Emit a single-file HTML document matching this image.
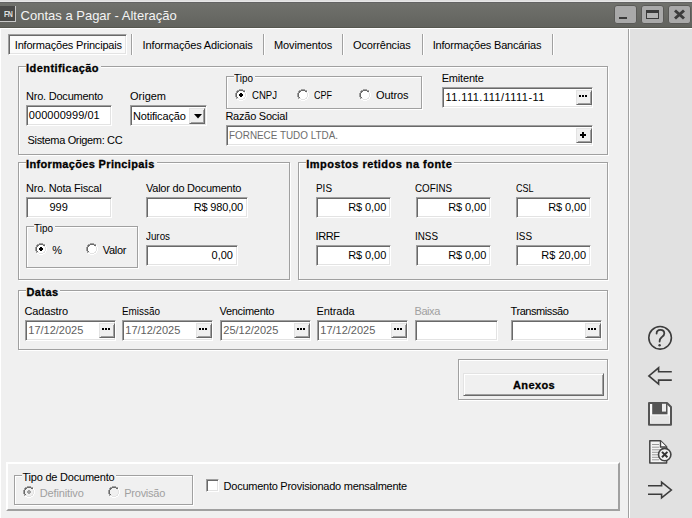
<!DOCTYPE html>
<html><head><meta charset="utf-8"><style>
html,body{margin:0;padding:0;}
body{width:692px;height:518px;overflow:hidden;position:relative;background:#f0f0f0;font-family:'Liberation Sans', sans-serif;}
body>div,body>svg{position:absolute;}
.t{line-height:20px;white-space:pre;height:20px;}
</style></head><body>
<div style="left:0px;top:0px;width:692px;height:1px;background:#dfdfdf"></div>
<div style="left:0px;top:1px;width:692px;height:1px;background:#e8e8e8"></div>
<div style="left:0px;top:2px;width:692px;height:1px;background:#636363"></div>
<div style="left:0px;top:3px;width:692px;height:24px;background:linear-gradient(#70716c,#62635e)"></div>
<div style="left:0px;top:27px;width:692px;height:1px;background:#56574f"></div>
<div style="left:0px;top:28px;width:692px;height:1px;background:#fff"></div>
<div style="left:0px;top:29px;width:1px;height:489px;background:#fff"></div>
<div style="left:628px;top:29px;width:1px;height:489px;background:#a0a0a0"></div>
<div style="left:629px;top:29px;width:1px;height:489px;background:#fff"></div>
<div style="left:630px;top:29px;width:62px;height:489px;background:#e1e1e1"></div>
<div style="left:0px;top:6px;width:16px;height:16px;background:#4a4a48;border-right:1px solid #c8c8c8;border-bottom:1px solid #c8c8c8;box-sizing:border-box"></div>
<div style="left:4px;top:9px;font:bold 8.8px/10px 'Liberation Sans';color:#e0e0e0;letter-spacing:-0.6px;transform:scaleX(0.8);transform-origin:0 0">FN</div>
<div class="t" style="left:20.6px;top:6px;color:#f4f4f4;font-size:13px;">Contas a Pagar - Alteração</div>
<div style="left:614px;top:5px;width:23px;height:19px;background:#a9a9a9;border:1px solid #5a5a57;border-radius:3px;box-sizing:border-box"></div>
<div style="left:641px;top:5px;width:23px;height:19px;background:#a9a9a9;border:1px solid #5a5a57;border-radius:3px;box-sizing:border-box"></div>
<div style="left:668px;top:5px;width:23px;height:19px;background:#a9a9a9;border:1px solid #5a5a57;border-radius:3px;box-sizing:border-box"></div>
<div style="left:619px;top:17px;width:8px;height:2px;background:#3a3a3a"></div>
<div style="left:646px;top:10px;width:13px;height:9px;border:1.3px solid #3a3a3a;border-top-width:3px;box-sizing:border-box;background:#b4b4b4"></div>
<svg style="left:673px;top:9px" width="13" height="11" viewBox="0 0 13 11"><path d="M2 1.5 L11 9.5 M11 1.5 L2 9.5" stroke="#3c3c3c" stroke-width="3"/></svg>
<div style="left:8px;top:34px;width:119px;height:21px;background:#fafafa;border:1px solid;border-color:#a0a0a0 #fff #fff #a0a0a0;box-shadow:inset 1px 1px 0 #696969, inset -1px -1px 0 #e3e3e3;box-sizing:border-box"></div>
<div class="t" style="left:14.8px;top:35px;color:#000;font-size:11px;letter-spacing:-0.195px;">Informações Principais</div>
<div style="left:131px;top:34px;width:1px;height:21px;background:#a0a0a0"></div>
<div style="left:132px;top:34px;width:1px;height:21px;background:#fff"></div>
<div style="left:263px;top:34px;width:1px;height:21px;background:#a0a0a0"></div>
<div style="left:264px;top:34px;width:1px;height:21px;background:#fff"></div>
<div style="left:342px;top:34px;width:1px;height:21px;background:#a0a0a0"></div>
<div style="left:343px;top:34px;width:1px;height:21px;background:#fff"></div>
<div style="left:422px;top:34px;width:1px;height:21px;background:#a0a0a0"></div>
<div style="left:423px;top:34px;width:1px;height:21px;background:#fff"></div>
<div style="left:552px;top:34px;width:1px;height:21px;background:#a0a0a0"></div>
<div style="left:553px;top:34px;width:1px;height:21px;background:#fff"></div>
<div class="t" style="left:142.6px;top:35px;color:#000;font-size:11px;letter-spacing:-0.142px;">Informações Adicionais</div>
<div class="t" style="left:274.0px;top:35px;color:#000;font-size:11px;letter-spacing:-0.130px;">Movimentos</div>
<div class="t" style="left:353.0px;top:35px;color:#000;font-size:11px;letter-spacing:-0.163px;">Ocorrências</div>
<div class="t" style="left:432.7px;top:35px;color:#000;font-size:11px;letter-spacing:-0.186px;">Informações Bancárias</div>
<div style="left:19px;top:67px;width:590px;height:89px;border:1px solid #fff;box-sizing:border-box"></div>
<div style="left:18px;top:66px;width:590px;height:89px;border:1px solid #a0a0a0;box-sizing:border-box"></div>
<div style="left:26px;top:62px;width:75px;height:12px;background:#f0f0f0"></div>
<div class="t" style="left:26.0px;top:58px;color:#000;font-size:11px;font-weight:bold;letter-spacing:0.442px;-webkit-text-stroke:0.3px #000;">Identificação</div>
<div class="t" style="left:26.0px;top:86px;color:#000;font-size:11px;letter-spacing:-0.221px;">Nro. Documento</div>
<div style="left:26px;top:105px;width:86px;height:21px;background:#fff;border:1px solid;border-color:#a0a0a0 #fff #fff #a0a0a0;box-shadow:inset 1px 1px 0 #696969, inset -1px -1px 0 #e3e3e3;box-sizing:border-box"></div>
<div class="t" style="left:28.8px;top:105px;color:#000;font-size:11px;letter-spacing:0.053px;">000000999/01</div>
<div class="t" style="left:130.0px;top:86px;color:#000;font-size:11px;letter-spacing:-0.010px;">Origem</div>
<div style="left:130px;top:105px;width:77px;height:21px;background:#fff;border:1px solid;border-color:#a0a0a0 #fff #fff #a0a0a0;box-shadow:inset 1px 1px 0 #696969, inset -1px -1px 0 #e3e3e3;box-sizing:border-box"></div>
<div class="t" style="left:133.0px;top:106px;color:#000;font-size:11px;letter-spacing:-0.157px;">Notificação</div>
<div style="left:189px;top:108px;width:16px;height:16px;background:#f0f0f0;border:1px solid;border-color:#e3e3e3 #696969 #696969 #e3e3e3;box-shadow:inset 1px 1px 0 #f0f0f0, inset -1px -1px 0 #a0a0a0;box-sizing:border-box"></div>
<svg style="left:194px;top:114px" width="8" height="5" viewBox="0 0 8 5"><path d="M0 0 H8 L4 4.5 Z" fill="#000"/></svg>
<div class="t" style="left:27.6px;top:130px;color:#000;font-size:11px;letter-spacing:-0.342px;">Sistema Origem: CC</div>
<div style="left:227px;top:77px;width:196px;height:33px;border:1px solid #fff;box-sizing:border-box"></div>
<div style="left:226px;top:76px;width:196px;height:33px;border:1px solid #a0a0a0;box-sizing:border-box"></div>
<div style="left:234px;top:72px;width:21px;height:12px;background:#f0f0f0"></div>
<div class="t" style="left:234.0px;top:68px;color:#000;font-size:11px;transform:scaleX(0.9048);transform-origin:0 0;">Tipo</div>
<svg style="left:235px;top:89px" width="12" height="12" viewBox="0 0 12 12" shape-rendering="crispEdges"><rect x="4" y="0" width="4" height="1" fill="#a0a0a0"/><rect x="2" y="1" width="2" height="1" fill="#a0a0a0"/><rect x="4" y="1" width="4" height="1" fill="#696969"/><rect x="8" y="1" width="2" height="1" fill="#a0a0a0"/><rect x="1" y="2" width="1" height="1" fill="#a0a0a0"/><rect x="2" y="2" width="2" height="1" fill="#696969"/><rect x="4" y="2" width="4" height="1" fill="#ffffff"/><rect x="8" y="2" width="2" height="1" fill="#696969"/><rect x="10" y="2" width="1" height="1" fill="#ffffff"/><rect x="1" y="3" width="1" height="1" fill="#a0a0a0"/><rect x="2" y="3" width="1" height="1" fill="#696969"/><rect x="3" y="3" width="6" height="1" fill="#ffffff"/><rect x="9" y="3" width="1" height="1" fill="#e3e3e3"/><rect x="10" y="3" width="1" height="1" fill="#ffffff"/><rect x="0" y="4" width="1" height="1" fill="#a0a0a0"/><rect x="1" y="4" width="1" height="1" fill="#696969"/><rect x="2" y="4" width="8" height="1" fill="#ffffff"/><rect x="10" y="4" width="1" height="1" fill="#e3e3e3"/><rect x="11" y="4" width="1" height="1" fill="#ffffff"/><rect x="0" y="5" width="1" height="1" fill="#a0a0a0"/><rect x="1" y="5" width="1" height="1" fill="#696969"/><rect x="2" y="5" width="8" height="1" fill="#ffffff"/><rect x="10" y="5" width="1" height="1" fill="#e3e3e3"/><rect x="11" y="5" width="1" height="1" fill="#ffffff"/><rect x="0" y="6" width="1" height="1" fill="#a0a0a0"/><rect x="1" y="6" width="1" height="1" fill="#696969"/><rect x="2" y="6" width="8" height="1" fill="#ffffff"/><rect x="10" y="6" width="1" height="1" fill="#e3e3e3"/><rect x="11" y="6" width="1" height="1" fill="#ffffff"/><rect x="0" y="7" width="1" height="1" fill="#a0a0a0"/><rect x="1" y="7" width="1" height="1" fill="#696969"/><rect x="2" y="7" width="8" height="1" fill="#ffffff"/><rect x="10" y="7" width="1" height="1" fill="#e3e3e3"/><rect x="11" y="7" width="1" height="1" fill="#ffffff"/><rect x="1" y="8" width="1" height="1" fill="#a0a0a0"/><rect x="2" y="8" width="1" height="1" fill="#696969"/><rect x="3" y="8" width="6" height="1" fill="#ffffff"/><rect x="9" y="8" width="1" height="1" fill="#e3e3e3"/><rect x="10" y="8" width="1" height="1" fill="#ffffff"/><rect x="1" y="9" width="1" height="1" fill="#a0a0a0"/><rect x="2" y="9" width="2" height="1" fill="#e3e3e3"/><rect x="4" y="9" width="4" height="1" fill="#ffffff"/><rect x="8" y="9" width="2" height="1" fill="#e3e3e3"/><rect x="10" y="9" width="1" height="1" fill="#ffffff"/><rect x="2" y="10" width="2" height="1" fill="#ffffff"/><rect x="4" y="10" width="4" height="1" fill="#e3e3e3"/><rect x="8" y="10" width="2" height="1" fill="#ffffff"/><rect x="4" y="11" width="4" height="1" fill="#ffffff"/><rect x="5" y="4" width="2" height="4" fill="#000"/><rect x="4" y="5" width="4" height="2" fill="#000"/></svg>
<div class="t" style="left:251.5px;top:85px;color:#000;font-size:11px;transform:scaleX(0.8700);transform-origin:0 0;">CNPJ</div>
<svg style="left:297px;top:89px" width="12" height="12" viewBox="0 0 12 12" shape-rendering="crispEdges"><rect x="4" y="0" width="4" height="1" fill="#a0a0a0"/><rect x="2" y="1" width="2" height="1" fill="#a0a0a0"/><rect x="4" y="1" width="4" height="1" fill="#696969"/><rect x="8" y="1" width="2" height="1" fill="#a0a0a0"/><rect x="1" y="2" width="1" height="1" fill="#a0a0a0"/><rect x="2" y="2" width="2" height="1" fill="#696969"/><rect x="4" y="2" width="4" height="1" fill="#ffffff"/><rect x="8" y="2" width="2" height="1" fill="#696969"/><rect x="10" y="2" width="1" height="1" fill="#ffffff"/><rect x="1" y="3" width="1" height="1" fill="#a0a0a0"/><rect x="2" y="3" width="1" height="1" fill="#696969"/><rect x="3" y="3" width="6" height="1" fill="#ffffff"/><rect x="9" y="3" width="1" height="1" fill="#e3e3e3"/><rect x="10" y="3" width="1" height="1" fill="#ffffff"/><rect x="0" y="4" width="1" height="1" fill="#a0a0a0"/><rect x="1" y="4" width="1" height="1" fill="#696969"/><rect x="2" y="4" width="8" height="1" fill="#ffffff"/><rect x="10" y="4" width="1" height="1" fill="#e3e3e3"/><rect x="11" y="4" width="1" height="1" fill="#ffffff"/><rect x="0" y="5" width="1" height="1" fill="#a0a0a0"/><rect x="1" y="5" width="1" height="1" fill="#696969"/><rect x="2" y="5" width="8" height="1" fill="#ffffff"/><rect x="10" y="5" width="1" height="1" fill="#e3e3e3"/><rect x="11" y="5" width="1" height="1" fill="#ffffff"/><rect x="0" y="6" width="1" height="1" fill="#a0a0a0"/><rect x="1" y="6" width="1" height="1" fill="#696969"/><rect x="2" y="6" width="8" height="1" fill="#ffffff"/><rect x="10" y="6" width="1" height="1" fill="#e3e3e3"/><rect x="11" y="6" width="1" height="1" fill="#ffffff"/><rect x="0" y="7" width="1" height="1" fill="#a0a0a0"/><rect x="1" y="7" width="1" height="1" fill="#696969"/><rect x="2" y="7" width="8" height="1" fill="#ffffff"/><rect x="10" y="7" width="1" height="1" fill="#e3e3e3"/><rect x="11" y="7" width="1" height="1" fill="#ffffff"/><rect x="1" y="8" width="1" height="1" fill="#a0a0a0"/><rect x="2" y="8" width="1" height="1" fill="#696969"/><rect x="3" y="8" width="6" height="1" fill="#ffffff"/><rect x="9" y="8" width="1" height="1" fill="#e3e3e3"/><rect x="10" y="8" width="1" height="1" fill="#ffffff"/><rect x="1" y="9" width="1" height="1" fill="#a0a0a0"/><rect x="2" y="9" width="2" height="1" fill="#e3e3e3"/><rect x="4" y="9" width="4" height="1" fill="#ffffff"/><rect x="8" y="9" width="2" height="1" fill="#e3e3e3"/><rect x="10" y="9" width="1" height="1" fill="#ffffff"/><rect x="2" y="10" width="2" height="1" fill="#ffffff"/><rect x="4" y="10" width="4" height="1" fill="#e3e3e3"/><rect x="8" y="10" width="2" height="1" fill="#ffffff"/><rect x="4" y="11" width="4" height="1" fill="#ffffff"/></svg>
<div class="t" style="left:314.0px;top:85px;color:#000;font-size:11px;transform:scaleX(0.8182);transform-origin:0 0;">CPF</div>
<svg style="left:359px;top:89px" width="12" height="12" viewBox="0 0 12 12" shape-rendering="crispEdges"><rect x="4" y="0" width="4" height="1" fill="#a0a0a0"/><rect x="2" y="1" width="2" height="1" fill="#a0a0a0"/><rect x="4" y="1" width="4" height="1" fill="#696969"/><rect x="8" y="1" width="2" height="1" fill="#a0a0a0"/><rect x="1" y="2" width="1" height="1" fill="#a0a0a0"/><rect x="2" y="2" width="2" height="1" fill="#696969"/><rect x="4" y="2" width="4" height="1" fill="#ffffff"/><rect x="8" y="2" width="2" height="1" fill="#696969"/><rect x="10" y="2" width="1" height="1" fill="#ffffff"/><rect x="1" y="3" width="1" height="1" fill="#a0a0a0"/><rect x="2" y="3" width="1" height="1" fill="#696969"/><rect x="3" y="3" width="6" height="1" fill="#ffffff"/><rect x="9" y="3" width="1" height="1" fill="#e3e3e3"/><rect x="10" y="3" width="1" height="1" fill="#ffffff"/><rect x="0" y="4" width="1" height="1" fill="#a0a0a0"/><rect x="1" y="4" width="1" height="1" fill="#696969"/><rect x="2" y="4" width="8" height="1" fill="#ffffff"/><rect x="10" y="4" width="1" height="1" fill="#e3e3e3"/><rect x="11" y="4" width="1" height="1" fill="#ffffff"/><rect x="0" y="5" width="1" height="1" fill="#a0a0a0"/><rect x="1" y="5" width="1" height="1" fill="#696969"/><rect x="2" y="5" width="8" height="1" fill="#ffffff"/><rect x="10" y="5" width="1" height="1" fill="#e3e3e3"/><rect x="11" y="5" width="1" height="1" fill="#ffffff"/><rect x="0" y="6" width="1" height="1" fill="#a0a0a0"/><rect x="1" y="6" width="1" height="1" fill="#696969"/><rect x="2" y="6" width="8" height="1" fill="#ffffff"/><rect x="10" y="6" width="1" height="1" fill="#e3e3e3"/><rect x="11" y="6" width="1" height="1" fill="#ffffff"/><rect x="0" y="7" width="1" height="1" fill="#a0a0a0"/><rect x="1" y="7" width="1" height="1" fill="#696969"/><rect x="2" y="7" width="8" height="1" fill="#ffffff"/><rect x="10" y="7" width="1" height="1" fill="#e3e3e3"/><rect x="11" y="7" width="1" height="1" fill="#ffffff"/><rect x="1" y="8" width="1" height="1" fill="#a0a0a0"/><rect x="2" y="8" width="1" height="1" fill="#696969"/><rect x="3" y="8" width="6" height="1" fill="#ffffff"/><rect x="9" y="8" width="1" height="1" fill="#e3e3e3"/><rect x="10" y="8" width="1" height="1" fill="#ffffff"/><rect x="1" y="9" width="1" height="1" fill="#a0a0a0"/><rect x="2" y="9" width="2" height="1" fill="#e3e3e3"/><rect x="4" y="9" width="4" height="1" fill="#ffffff"/><rect x="8" y="9" width="2" height="1" fill="#e3e3e3"/><rect x="10" y="9" width="1" height="1" fill="#ffffff"/><rect x="2" y="10" width="2" height="1" fill="#ffffff"/><rect x="4" y="10" width="4" height="1" fill="#e3e3e3"/><rect x="8" y="10" width="2" height="1" fill="#ffffff"/><rect x="4" y="11" width="4" height="1" fill="#ffffff"/></svg>
<div class="t" style="left:376.0px;top:85px;color:#000;font-size:11px;letter-spacing:-0.103px;">Outros</div>
<div class="t" style="left:441.7px;top:68px;color:#000;font-size:11px;letter-spacing:-0.178px;">Emitente</div>
<div style="left:442px;top:87px;width:151px;height:21px;background:#fff;border:1px solid;border-color:#a0a0a0 #fff #fff #a0a0a0;box-shadow:inset 1px 1px 0 #696969, inset -1px -1px 0 #e3e3e3;box-sizing:border-box"></div>
<div class="t" style="left:445.4px;top:87px;color:#000;font-size:11px;letter-spacing:0.464px;">11.111.111/1111-11</div>
<div style="left:576px;top:90px;width:16px;height:15px;background:#f0f0f0;border:1px solid;border-color:#e3e3e3 #696969 #696969 #e3e3e3;box-shadow:inset 1px 1px 0 #f0f0f0, inset -1px -1px 0 #a0a0a0;box-sizing:border-box"></div>
<div style="left:579px;top:95px;width:2px;height:2px;background:#000"></div>
<div style="left:582px;top:95px;width:2px;height:2px;background:#000"></div>
<div style="left:585px;top:95px;width:2px;height:2px;background:#000"></div>
<div class="t" style="left:225.4px;top:106px;color:#000;font-size:11px;letter-spacing:-0.236px;">Razão Social</div>
<div style="left:226px;top:125px;width:367px;height:21px;background:#fff;border:1px solid;border-color:#a0a0a0 #fff #fff #a0a0a0;box-shadow:inset 1px 1px 0 #696969, inset -1px -1px 0 #e3e3e3;box-sizing:border-box"></div>
<div class="t" style="left:228.5px;top:125px;color:#6d6d6d;font-size:11px;transform:scaleX(0.8992);transform-origin:0 0;">FORNECE TUDO LTDA.</div>
<div style="left:576px;top:128px;width:16px;height:15px;background:#f0f0f0;border:1px solid;border-color:#e3e3e3 #696969 #696969 #e3e3e3;box-shadow:inset 1px 1px 0 #f0f0f0, inset -1px -1px 0 #a0a0a0;box-sizing:border-box"></div>
<div style="left:580px;top:134px;width:6px;height:2px;background:#000"></div>
<div style="left:582px;top:132px;width:2px;height:6px;background:#000"></div>
<div style="left:19px;top:163px;width:272px;height:118px;border:1px solid #fff;box-sizing:border-box"></div>
<div style="left:18px;top:162px;width:272px;height:118px;border:1px solid #a0a0a0;box-sizing:border-box"></div>
<div style="left:26px;top:158px;width:130.6px;height:12px;background:#f0f0f0"></div>
<div class="t" style="left:26.0px;top:154px;color:#000;font-size:11px;font-weight:bold;letter-spacing:0.343px;-webkit-text-stroke:0.3px #000;">Informações Principais</div>
<div class="t" style="left:26.0px;top:178px;color:#000;font-size:11px;letter-spacing:-0.216px;">Nro. Nota Fiscal</div>
<div style="left:26px;top:197px;width:86px;height:21px;background:#fff;border:1px solid;border-color:#a0a0a0 #fff #fff #a0a0a0;box-shadow:inset 1px 1px 0 #696969, inset -1px -1px 0 #e3e3e3;box-sizing:border-box"></div>
<div class="t" style="left:49.5px;top:197px;color:#000;font-size:11px;letter-spacing:-0.053px;">999</div>
<div class="t" style="left:146.0px;top:178px;color:#000;font-size:11px;letter-spacing:-0.237px;">Valor do Documento</div>
<div style="left:146px;top:197px;width:102px;height:21px;background:#fff;border:1px solid;border-color:#a0a0a0 #fff #fff #a0a0a0;box-shadow:inset 1px 1px 0 #696969, inset -1px -1px 0 #e3e3e3;box-sizing:border-box"></div>
<div class="t" style="left:193.7px;top:197px;color:#000;font-size:11px;letter-spacing:-0.163px;">R$ 980,00</div>
<div style="left:27px;top:227px;width:112px;height:42px;border:1px solid #fff;box-sizing:border-box"></div>
<div style="left:26px;top:226px;width:112px;height:42px;border:1px solid #a0a0a0;box-sizing:border-box"></div>
<div style="left:34px;top:222px;width:21px;height:12px;background:#f0f0f0"></div>
<div class="t" style="left:34.0px;top:218px;color:#000;font-size:11px;transform:scaleX(0.9048);transform-origin:0 0;">Tipo</div>
<svg style="left:35px;top:243px" width="12" height="12" viewBox="0 0 12 12" shape-rendering="crispEdges"><rect x="4" y="0" width="4" height="1" fill="#a0a0a0"/><rect x="2" y="1" width="2" height="1" fill="#a0a0a0"/><rect x="4" y="1" width="4" height="1" fill="#696969"/><rect x="8" y="1" width="2" height="1" fill="#a0a0a0"/><rect x="1" y="2" width="1" height="1" fill="#a0a0a0"/><rect x="2" y="2" width="2" height="1" fill="#696969"/><rect x="4" y="2" width="4" height="1" fill="#ffffff"/><rect x="8" y="2" width="2" height="1" fill="#696969"/><rect x="10" y="2" width="1" height="1" fill="#ffffff"/><rect x="1" y="3" width="1" height="1" fill="#a0a0a0"/><rect x="2" y="3" width="1" height="1" fill="#696969"/><rect x="3" y="3" width="6" height="1" fill="#ffffff"/><rect x="9" y="3" width="1" height="1" fill="#e3e3e3"/><rect x="10" y="3" width="1" height="1" fill="#ffffff"/><rect x="0" y="4" width="1" height="1" fill="#a0a0a0"/><rect x="1" y="4" width="1" height="1" fill="#696969"/><rect x="2" y="4" width="8" height="1" fill="#ffffff"/><rect x="10" y="4" width="1" height="1" fill="#e3e3e3"/><rect x="11" y="4" width="1" height="1" fill="#ffffff"/><rect x="0" y="5" width="1" height="1" fill="#a0a0a0"/><rect x="1" y="5" width="1" height="1" fill="#696969"/><rect x="2" y="5" width="8" height="1" fill="#ffffff"/><rect x="10" y="5" width="1" height="1" fill="#e3e3e3"/><rect x="11" y="5" width="1" height="1" fill="#ffffff"/><rect x="0" y="6" width="1" height="1" fill="#a0a0a0"/><rect x="1" y="6" width="1" height="1" fill="#696969"/><rect x="2" y="6" width="8" height="1" fill="#ffffff"/><rect x="10" y="6" width="1" height="1" fill="#e3e3e3"/><rect x="11" y="6" width="1" height="1" fill="#ffffff"/><rect x="0" y="7" width="1" height="1" fill="#a0a0a0"/><rect x="1" y="7" width="1" height="1" fill="#696969"/><rect x="2" y="7" width="8" height="1" fill="#ffffff"/><rect x="10" y="7" width="1" height="1" fill="#e3e3e3"/><rect x="11" y="7" width="1" height="1" fill="#ffffff"/><rect x="1" y="8" width="1" height="1" fill="#a0a0a0"/><rect x="2" y="8" width="1" height="1" fill="#696969"/><rect x="3" y="8" width="6" height="1" fill="#ffffff"/><rect x="9" y="8" width="1" height="1" fill="#e3e3e3"/><rect x="10" y="8" width="1" height="1" fill="#ffffff"/><rect x="1" y="9" width="1" height="1" fill="#a0a0a0"/><rect x="2" y="9" width="2" height="1" fill="#e3e3e3"/><rect x="4" y="9" width="4" height="1" fill="#ffffff"/><rect x="8" y="9" width="2" height="1" fill="#e3e3e3"/><rect x="10" y="9" width="1" height="1" fill="#ffffff"/><rect x="2" y="10" width="2" height="1" fill="#ffffff"/><rect x="4" y="10" width="4" height="1" fill="#e3e3e3"/><rect x="8" y="10" width="2" height="1" fill="#ffffff"/><rect x="4" y="11" width="4" height="1" fill="#ffffff"/><rect x="5" y="4" width="2" height="4" fill="#000"/><rect x="4" y="5" width="4" height="2" fill="#000"/></svg>
<div class="t" style="left:52.3px;top:240px;color:#000;font-size:11px;">%</div>
<svg style="left:86px;top:243px" width="12" height="12" viewBox="0 0 12 12" shape-rendering="crispEdges"><rect x="4" y="0" width="4" height="1" fill="#a0a0a0"/><rect x="2" y="1" width="2" height="1" fill="#a0a0a0"/><rect x="4" y="1" width="4" height="1" fill="#696969"/><rect x="8" y="1" width="2" height="1" fill="#a0a0a0"/><rect x="1" y="2" width="1" height="1" fill="#a0a0a0"/><rect x="2" y="2" width="2" height="1" fill="#696969"/><rect x="4" y="2" width="4" height="1" fill="#ffffff"/><rect x="8" y="2" width="2" height="1" fill="#696969"/><rect x="10" y="2" width="1" height="1" fill="#ffffff"/><rect x="1" y="3" width="1" height="1" fill="#a0a0a0"/><rect x="2" y="3" width="1" height="1" fill="#696969"/><rect x="3" y="3" width="6" height="1" fill="#ffffff"/><rect x="9" y="3" width="1" height="1" fill="#e3e3e3"/><rect x="10" y="3" width="1" height="1" fill="#ffffff"/><rect x="0" y="4" width="1" height="1" fill="#a0a0a0"/><rect x="1" y="4" width="1" height="1" fill="#696969"/><rect x="2" y="4" width="8" height="1" fill="#ffffff"/><rect x="10" y="4" width="1" height="1" fill="#e3e3e3"/><rect x="11" y="4" width="1" height="1" fill="#ffffff"/><rect x="0" y="5" width="1" height="1" fill="#a0a0a0"/><rect x="1" y="5" width="1" height="1" fill="#696969"/><rect x="2" y="5" width="8" height="1" fill="#ffffff"/><rect x="10" y="5" width="1" height="1" fill="#e3e3e3"/><rect x="11" y="5" width="1" height="1" fill="#ffffff"/><rect x="0" y="6" width="1" height="1" fill="#a0a0a0"/><rect x="1" y="6" width="1" height="1" fill="#696969"/><rect x="2" y="6" width="8" height="1" fill="#ffffff"/><rect x="10" y="6" width="1" height="1" fill="#e3e3e3"/><rect x="11" y="6" width="1" height="1" fill="#ffffff"/><rect x="0" y="7" width="1" height="1" fill="#a0a0a0"/><rect x="1" y="7" width="1" height="1" fill="#696969"/><rect x="2" y="7" width="8" height="1" fill="#ffffff"/><rect x="10" y="7" width="1" height="1" fill="#e3e3e3"/><rect x="11" y="7" width="1" height="1" fill="#ffffff"/><rect x="1" y="8" width="1" height="1" fill="#a0a0a0"/><rect x="2" y="8" width="1" height="1" fill="#696969"/><rect x="3" y="8" width="6" height="1" fill="#ffffff"/><rect x="9" y="8" width="1" height="1" fill="#e3e3e3"/><rect x="10" y="8" width="1" height="1" fill="#ffffff"/><rect x="1" y="9" width="1" height="1" fill="#a0a0a0"/><rect x="2" y="9" width="2" height="1" fill="#e3e3e3"/><rect x="4" y="9" width="4" height="1" fill="#ffffff"/><rect x="8" y="9" width="2" height="1" fill="#e3e3e3"/><rect x="10" y="9" width="1" height="1" fill="#ffffff"/><rect x="2" y="10" width="2" height="1" fill="#ffffff"/><rect x="4" y="10" width="4" height="1" fill="#e3e3e3"/><rect x="8" y="10" width="2" height="1" fill="#ffffff"/><rect x="4" y="11" width="4" height="1" fill="#ffffff"/></svg>
<div class="t" style="left:102.7px;top:240px;color:#000;font-size:11px;letter-spacing:-0.275px;">Valor</div>
<div class="t" style="left:146.0px;top:226px;color:#000;font-size:11px;transform:scaleX(0.8920);transform-origin:0 0;">Juros</div>
<div style="left:146px;top:245px;width:92px;height:21px;background:#fff;border:1px solid;border-color:#a0a0a0 #fff #fff #a0a0a0;box-shadow:inset 1px 1px 0 #696969, inset -1px -1px 0 #e3e3e3;box-sizing:border-box"></div>
<div class="t" style="left:211.5px;top:245px;color:#000;font-size:11px;letter-spacing:0.020px;">0,00</div>
<div style="left:299px;top:163px;width:310px;height:118px;border:1px solid #fff;box-sizing:border-box"></div>
<div style="left:298px;top:162px;width:310px;height:118px;border:1px solid #a0a0a0;box-sizing:border-box"></div>
<div style="left:306px;top:158px;width:148px;height:12px;background:#f0f0f0"></div>
<div class="t" style="left:306.3px;top:154px;color:#000;font-size:11px;font-weight:bold;letter-spacing:0.461px;-webkit-text-stroke:0.3px #000;">Impostos retidos na fonte</div>
<div class="t" style="left:315.5px;top:178px;color:#000;font-size:11px;transform:scaleX(0.9022);transform-origin:0 0;">PIS</div>
<div style="left:316px;top:197px;width:75px;height:21px;background:#fff;border:1px solid;border-color:#a0a0a0 #fff #fff #a0a0a0;box-shadow:inset 1px 1px 0 #696969, inset -1px -1px 0 #e3e3e3;box-sizing:border-box"></div>
<div class="t" style="left:348.2px;top:197px;color:#000;font-size:11px;letter-spacing:-0.076px;">R$ 0,00</div>
<div class="t" style="left:414.5px;top:178px;color:#000;font-size:11px;transform:scaleX(0.8902);transform-origin:0 0;">COFINS</div>
<div style="left:416px;top:197px;width:75px;height:21px;background:#fff;border:1px solid;border-color:#a0a0a0 #fff #fff #a0a0a0;box-shadow:inset 1px 1px 0 #696969, inset -1px -1px 0 #e3e3e3;box-sizing:border-box"></div>
<div class="t" style="left:448.2px;top:197px;color:#000;font-size:11px;letter-spacing:-0.076px;">R$ 0,00</div>
<div class="t" style="left:515.5px;top:178px;color:#000;font-size:11px;transform:scaleX(0.8222);transform-origin:0 0;">CSL</div>
<div style="left:516px;top:197px;width:75px;height:21px;background:#fff;border:1px solid;border-color:#a0a0a0 #fff #fff #a0a0a0;box-shadow:inset 1px 1px 0 #696969, inset -1px -1px 0 #e3e3e3;box-sizing:border-box"></div>
<div class="t" style="left:548.2px;top:197px;color:#000;font-size:11px;letter-spacing:-0.076px;">R$ 0,00</div>
<div class="t" style="left:315.5px;top:226px;color:#000;font-size:11px;letter-spacing:-0.418px;">IRRF</div>
<div style="left:316px;top:245px;width:75px;height:21px;background:#fff;border:1px solid;border-color:#a0a0a0 #fff #fff #a0a0a0;box-shadow:inset 1px 1px 0 #696969, inset -1px -1px 0 #e3e3e3;box-sizing:border-box"></div>
<div class="t" style="left:348.2px;top:245px;color:#000;font-size:11px;letter-spacing:-0.076px;">R$ 0,00</div>
<div class="t" style="left:414.5px;top:226px;color:#000;font-size:11px;transform:scaleX(0.8954);transform-origin:0 0;">INSS</div>
<div style="left:416px;top:245px;width:75px;height:21px;background:#fff;border:1px solid;border-color:#a0a0a0 #fff #fff #a0a0a0;box-shadow:inset 1px 1px 0 #696969, inset -1px -1px 0 #e3e3e3;box-sizing:border-box"></div>
<div class="t" style="left:448.2px;top:245px;color:#000;font-size:11px;letter-spacing:-0.076px;">R$ 0,00</div>
<div class="t" style="left:515.5px;top:226px;color:#000;font-size:11px;transform:scaleX(0.9022);transform-origin:0 0;">ISS</div>
<div style="left:516px;top:245px;width:75px;height:21px;background:#fff;border:1px solid;border-color:#a0a0a0 #fff #fff #a0a0a0;box-shadow:inset 1px 1px 0 #696969, inset -1px -1px 0 #e3e3e3;box-sizing:border-box"></div>
<div class="t" style="left:541.2px;top:245px;color:#000;font-size:11px;letter-spacing:0.043px;">R$ 20,00</div>
<div style="left:19px;top:291px;width:590px;height:60px;border:1px solid #fff;box-sizing:border-box"></div>
<div style="left:18px;top:290px;width:590px;height:60px;border:1px solid #a0a0a0;box-sizing:border-box"></div>
<div style="left:26px;top:286px;width:34px;height:12px;background:#f0f0f0"></div>
<div class="t" style="left:26.5px;top:282px;color:#000;font-size:11px;font-weight:bold;letter-spacing:0.406px;-webkit-text-stroke:0.3px #000;">Datas</div>
<div class="t" style="left:24.5px;top:301px;color:#000;font-size:11px;letter-spacing:-0.155px;">Cadastro</div>
<div style="left:25px;top:320px;width:91px;height:21px;background:#fff;border:1px solid;border-color:#a0a0a0 #fff #fff #a0a0a0;box-shadow:inset 1px 1px 0 #696969, inset -1px -1px 0 #e3e3e3;box-sizing:border-box"></div>
<div class="t" style="left:28.3px;top:320px;color:#606060;font-size:11px;letter-spacing:-0.006px;">17/12/2025</div>
<div style="left:99px;top:323px;width:16px;height:15px;background:#f0f0f0;border:1px solid;border-color:#e3e3e3 #696969 #696969 #e3e3e3;box-shadow:inset 1px 1px 0 #f0f0f0, inset -1px -1px 0 #a0a0a0;box-sizing:border-box"></div>
<div style="left:102px;top:328px;width:2px;height:2px;background:#000"></div>
<div style="left:105px;top:328px;width:2px;height:2px;background:#000"></div>
<div style="left:108px;top:328px;width:2px;height:2px;background:#000"></div>
<div class="t" style="left:121.5px;top:301px;color:#000;font-size:11px;transform:scaleX(0.9007);transform-origin:0 0;">Emissão</div>
<div style="left:122px;top:320px;width:91px;height:21px;background:#fff;border:1px solid;border-color:#a0a0a0 #fff #fff #a0a0a0;box-shadow:inset 1px 1px 0 #696969, inset -1px -1px 0 #e3e3e3;box-sizing:border-box"></div>
<div class="t" style="left:125.3px;top:320px;color:#606060;font-size:11px;letter-spacing:-0.006px;">17/12/2025</div>
<div style="left:196px;top:323px;width:16px;height:15px;background:#f0f0f0;border:1px solid;border-color:#e3e3e3 #696969 #696969 #e3e3e3;box-shadow:inset 1px 1px 0 #f0f0f0, inset -1px -1px 0 #a0a0a0;box-sizing:border-box"></div>
<div style="left:199px;top:328px;width:2px;height:2px;background:#000"></div>
<div style="left:202px;top:328px;width:2px;height:2px;background:#000"></div>
<div style="left:205px;top:328px;width:2px;height:2px;background:#000"></div>
<div class="t" style="left:219.5px;top:301px;color:#000;font-size:11px;letter-spacing:-0.288px;">Vencimento</div>
<div style="left:220px;top:320px;width:91px;height:21px;background:#fff;border:1px solid;border-color:#a0a0a0 #fff #fff #a0a0a0;box-shadow:inset 1px 1px 0 #696969, inset -1px -1px 0 #e3e3e3;box-sizing:border-box"></div>
<div class="t" style="left:223.3px;top:320px;color:#606060;font-size:11px;letter-spacing:-0.006px;">25/12/2025</div>
<div style="left:294px;top:323px;width:16px;height:15px;background:#f0f0f0;border:1px solid;border-color:#e3e3e3 #696969 #696969 #e3e3e3;box-shadow:inset 1px 1px 0 #f0f0f0, inset -1px -1px 0 #a0a0a0;box-sizing:border-box"></div>
<div style="left:297px;top:328px;width:2px;height:2px;background:#000"></div>
<div style="left:300px;top:328px;width:2px;height:2px;background:#000"></div>
<div style="left:303px;top:328px;width:2px;height:2px;background:#000"></div>
<div class="t" style="left:316.5px;top:301px;color:#000;font-size:11px;letter-spacing:-0.076px;">Entrada</div>
<div style="left:317px;top:320px;width:91px;height:21px;background:#fff;border:1px solid;border-color:#a0a0a0 #fff #fff #a0a0a0;box-shadow:inset 1px 1px 0 #696969, inset -1px -1px 0 #e3e3e3;box-sizing:border-box"></div>
<div class="t" style="left:320.3px;top:320px;color:#606060;font-size:11px;letter-spacing:-0.006px;">17/12/2025</div>
<div style="left:391px;top:323px;width:16px;height:15px;background:#f0f0f0;border:1px solid;border-color:#e3e3e3 #696969 #696969 #e3e3e3;box-shadow:inset 1px 1px 0 #f0f0f0, inset -1px -1px 0 #a0a0a0;box-sizing:border-box"></div>
<div style="left:394px;top:328px;width:2px;height:2px;background:#000"></div>
<div style="left:397px;top:328px;width:2px;height:2px;background:#000"></div>
<div style="left:400px;top:328px;width:2px;height:2px;background:#000"></div>
<div class="t" style="left:414.5px;top:301px;color:#a0a0a0;font-size:11px;letter-spacing:-0.426px;">Baixa</div>
<div style="left:415px;top:320px;width:83px;height:21px;background:#fff;border:1px solid;border-color:#a0a0a0 #fff #fff #a0a0a0;box-shadow:inset 1px 1px 0 #696969, inset -1px -1px 0 #e3e3e3;box-sizing:border-box"></div>
<div class="t" style="left:510.5px;top:301px;color:#000;font-size:11px;letter-spacing:-0.424px;">Transmissão</div>
<div style="left:511px;top:320px;width:91px;height:21px;background:#fff;border:1px solid;border-color:#a0a0a0 #fff #fff #a0a0a0;box-shadow:inset 1px 1px 0 #696969, inset -1px -1px 0 #e3e3e3;box-sizing:border-box"></div>
<div style="left:585px;top:323px;width:16px;height:15px;background:#f0f0f0;border:1px solid;border-color:#e3e3e3 #696969 #696969 #e3e3e3;box-shadow:inset 1px 1px 0 #f0f0f0, inset -1px -1px 0 #a0a0a0;box-sizing:border-box"></div>
<div style="left:588px;top:328px;width:2px;height:2px;background:#000"></div>
<div style="left:591px;top:328px;width:2px;height:2px;background:#000"></div>
<div style="left:594px;top:328px;width:2px;height:2px;background:#000"></div>
<div style="left:459px;top:360px;width:150px;height:41px;border:1px solid #fff;box-sizing:border-box"></div>
<div style="left:458px;top:359px;width:150px;height:41px;border:1px solid #a0a0a0;box-sizing:border-box"></div>
<div style="left:463px;top:373px;width:141px;height:23px;background:#f0f0f0;border:1px solid;border-color:#e3e3e3 #696969 #696969 #e3e3e3;box-shadow:inset 1px 1px 0 #fff, inset -1px -1px 0 #a0a0a0;box-sizing:border-box"></div>
<div class="t" style="left:513.0px;top:375px;color:#000;font-size:11px;font-weight:bold;letter-spacing:0.375px;-webkit-text-stroke:0.3px #000;">Anexos</div>
<div style="left:6px;top:462px;width:614px;height:49px;border:2px solid;border-color:#fff #a0a0a0 #a0a0a0 #fff;box-sizing:border-box"></div>
<div style="left:15px;top:476px;width:179px;height:30px;border:1px solid #fff;box-sizing:border-box"></div>
<div style="left:14px;top:475px;width:179px;height:30px;border:1px solid #a0a0a0;box-sizing:border-box"></div>
<div style="left:22px;top:471px;width:94px;height:12px;background:#f0f0f0"></div>
<div class="t" style="left:22.4px;top:467px;color:#000;font-size:11px;letter-spacing:-0.211px;">Tipo de Documento</div>
<svg style="left:23px;top:486px" width="12" height="12" viewBox="0 0 12 12" shape-rendering="crispEdges"><rect x="4" y="0" width="4" height="1" fill="#a0a0a0"/><rect x="2" y="1" width="2" height="1" fill="#a0a0a0"/><rect x="4" y="1" width="4" height="1" fill="#696969"/><rect x="8" y="1" width="2" height="1" fill="#a0a0a0"/><rect x="1" y="2" width="1" height="1" fill="#a0a0a0"/><rect x="2" y="2" width="2" height="1" fill="#696969"/><rect x="4" y="2" width="4" height="1" fill="#f0f0f0"/><rect x="8" y="2" width="2" height="1" fill="#696969"/><rect x="10" y="2" width="1" height="1" fill="#ffffff"/><rect x="1" y="3" width="1" height="1" fill="#a0a0a0"/><rect x="2" y="3" width="1" height="1" fill="#696969"/><rect x="3" y="3" width="6" height="1" fill="#f0f0f0"/><rect x="9" y="3" width="1" height="1" fill="#e3e3e3"/><rect x="10" y="3" width="1" height="1" fill="#ffffff"/><rect x="0" y="4" width="1" height="1" fill="#a0a0a0"/><rect x="1" y="4" width="1" height="1" fill="#696969"/><rect x="2" y="4" width="8" height="1" fill="#f0f0f0"/><rect x="10" y="4" width="1" height="1" fill="#e3e3e3"/><rect x="11" y="4" width="1" height="1" fill="#ffffff"/><rect x="0" y="5" width="1" height="1" fill="#a0a0a0"/><rect x="1" y="5" width="1" height="1" fill="#696969"/><rect x="2" y="5" width="8" height="1" fill="#f0f0f0"/><rect x="10" y="5" width="1" height="1" fill="#e3e3e3"/><rect x="11" y="5" width="1" height="1" fill="#ffffff"/><rect x="0" y="6" width="1" height="1" fill="#a0a0a0"/><rect x="1" y="6" width="1" height="1" fill="#696969"/><rect x="2" y="6" width="8" height="1" fill="#f0f0f0"/><rect x="10" y="6" width="1" height="1" fill="#e3e3e3"/><rect x="11" y="6" width="1" height="1" fill="#ffffff"/><rect x="0" y="7" width="1" height="1" fill="#a0a0a0"/><rect x="1" y="7" width="1" height="1" fill="#696969"/><rect x="2" y="7" width="8" height="1" fill="#f0f0f0"/><rect x="10" y="7" width="1" height="1" fill="#e3e3e3"/><rect x="11" y="7" width="1" height="1" fill="#ffffff"/><rect x="1" y="8" width="1" height="1" fill="#a0a0a0"/><rect x="2" y="8" width="1" height="1" fill="#696969"/><rect x="3" y="8" width="6" height="1" fill="#f0f0f0"/><rect x="9" y="8" width="1" height="1" fill="#e3e3e3"/><rect x="10" y="8" width="1" height="1" fill="#ffffff"/><rect x="1" y="9" width="1" height="1" fill="#a0a0a0"/><rect x="2" y="9" width="2" height="1" fill="#e3e3e3"/><rect x="4" y="9" width="4" height="1" fill="#f0f0f0"/><rect x="8" y="9" width="2" height="1" fill="#e3e3e3"/><rect x="10" y="9" width="1" height="1" fill="#ffffff"/><rect x="2" y="10" width="2" height="1" fill="#ffffff"/><rect x="4" y="10" width="4" height="1" fill="#e3e3e3"/><rect x="8" y="10" width="2" height="1" fill="#ffffff"/><rect x="4" y="11" width="4" height="1" fill="#ffffff"/><rect x="5" y="4" width="2" height="4" fill="#a0a0a0"/><rect x="4" y="5" width="4" height="2" fill="#a0a0a0"/></svg>
<div class="t" style="left:39.7px;top:483px;color:#a0a0a0;font-size:11px;letter-spacing:-0.125px;">Definitivo</div>
<svg style="left:108px;top:486px" width="12" height="12" viewBox="0 0 12 12" shape-rendering="crispEdges"><rect x="4" y="0" width="4" height="1" fill="#a0a0a0"/><rect x="2" y="1" width="2" height="1" fill="#a0a0a0"/><rect x="4" y="1" width="4" height="1" fill="#696969"/><rect x="8" y="1" width="2" height="1" fill="#a0a0a0"/><rect x="1" y="2" width="1" height="1" fill="#a0a0a0"/><rect x="2" y="2" width="2" height="1" fill="#696969"/><rect x="4" y="2" width="4" height="1" fill="#f0f0f0"/><rect x="8" y="2" width="2" height="1" fill="#696969"/><rect x="10" y="2" width="1" height="1" fill="#ffffff"/><rect x="1" y="3" width="1" height="1" fill="#a0a0a0"/><rect x="2" y="3" width="1" height="1" fill="#696969"/><rect x="3" y="3" width="6" height="1" fill="#f0f0f0"/><rect x="9" y="3" width="1" height="1" fill="#e3e3e3"/><rect x="10" y="3" width="1" height="1" fill="#ffffff"/><rect x="0" y="4" width="1" height="1" fill="#a0a0a0"/><rect x="1" y="4" width="1" height="1" fill="#696969"/><rect x="2" y="4" width="8" height="1" fill="#f0f0f0"/><rect x="10" y="4" width="1" height="1" fill="#e3e3e3"/><rect x="11" y="4" width="1" height="1" fill="#ffffff"/><rect x="0" y="5" width="1" height="1" fill="#a0a0a0"/><rect x="1" y="5" width="1" height="1" fill="#696969"/><rect x="2" y="5" width="8" height="1" fill="#f0f0f0"/><rect x="10" y="5" width="1" height="1" fill="#e3e3e3"/><rect x="11" y="5" width="1" height="1" fill="#ffffff"/><rect x="0" y="6" width="1" height="1" fill="#a0a0a0"/><rect x="1" y="6" width="1" height="1" fill="#696969"/><rect x="2" y="6" width="8" height="1" fill="#f0f0f0"/><rect x="10" y="6" width="1" height="1" fill="#e3e3e3"/><rect x="11" y="6" width="1" height="1" fill="#ffffff"/><rect x="0" y="7" width="1" height="1" fill="#a0a0a0"/><rect x="1" y="7" width="1" height="1" fill="#696969"/><rect x="2" y="7" width="8" height="1" fill="#f0f0f0"/><rect x="10" y="7" width="1" height="1" fill="#e3e3e3"/><rect x="11" y="7" width="1" height="1" fill="#ffffff"/><rect x="1" y="8" width="1" height="1" fill="#a0a0a0"/><rect x="2" y="8" width="1" height="1" fill="#696969"/><rect x="3" y="8" width="6" height="1" fill="#f0f0f0"/><rect x="9" y="8" width="1" height="1" fill="#e3e3e3"/><rect x="10" y="8" width="1" height="1" fill="#ffffff"/><rect x="1" y="9" width="1" height="1" fill="#a0a0a0"/><rect x="2" y="9" width="2" height="1" fill="#e3e3e3"/><rect x="4" y="9" width="4" height="1" fill="#f0f0f0"/><rect x="8" y="9" width="2" height="1" fill="#e3e3e3"/><rect x="10" y="9" width="1" height="1" fill="#ffffff"/><rect x="2" y="10" width="2" height="1" fill="#ffffff"/><rect x="4" y="10" width="4" height="1" fill="#e3e3e3"/><rect x="8" y="10" width="2" height="1" fill="#ffffff"/><rect x="4" y="11" width="4" height="1" fill="#ffffff"/></svg>
<div class="t" style="left:124.3px;top:483px;color:#a0a0a0;font-size:11px;letter-spacing:-0.262px;">Provisão</div>
<div style="left:206px;top:479px;width:13px;height:13px;background:#fff;border:1px solid;border-color:#a0a0a0 #fff #fff #a0a0a0;box-shadow:inset 1px 1px 0 #696969, inset -1px -1px 0 #e3e3e3;box-sizing:border-box"></div>
<div class="t" style="left:223.6px;top:476px;color:#000;font-size:11px;letter-spacing:-0.253px;">Documento Provisionado mensalmente</div>
<svg style="left:630px;top:300px" width="62" height="218" viewBox="630 300 62 218">
<circle cx="660.1" cy="337.8" r="11.3" fill="none" stroke="#3c3c3c" stroke-width="1.6"/>
<path d="M656.6 333.6 C656.6 331.2 658.3 329.9 660.4 329.9 C662.7 329.9 664.3 331.4 664.3 333.4 C664.3 335.4 662.8 336.3 661.6 337.3 C660.5 338.2 659.6 339.2 659.6 341.6" fill="none" stroke="#3c3c3c" stroke-width="1.8" stroke-linecap="round"/>
<circle cx="659.6" cy="345.2" r="1.2" fill="#3c3c3c"/>
<path d="M671.8 371.8 H658.6 V367.8 L648.9 375.9 L658.6 384 V380.1 H671.8" fill="none" stroke="#3c3c3c" stroke-width="1.6" stroke-miterlimit="3"/>
<path d="M649 403 H667 L671 407 V424.8 H649 Z" fill="#fafafa" stroke="#555" stroke-width="2" stroke-linejoin="round"/>
<rect x="650.5" y="415.5" width="19" height="8" fill="#e6e6e6"/>
<rect x="652.2" y="403" width="15.3" height="11.3" fill="#555"/>
<rect x="662" y="403.8" width="4" height="7.8" fill="#eee"/>
<path d="M649.8 440.8 H660.5 L666.6 446.9 V463 H649.8 Z" fill="#f4f4f4" stroke="#444" stroke-width="1.5" stroke-linejoin="round"/>
<path d="M660.5 441 V447 H666.5" fill="#fff" stroke="#444" stroke-width="1.4"/>
<path d="M652 444.5 H659 M652 447.2 H659 M652 449.8 H662 M652 452.3 H659 M652 454.8 H659 M652 457.3 H659 M652 459.8 H659" stroke="#999" stroke-width="1"/>
<circle cx="664.7" cy="454.6" r="6.2" fill="#f0f0f0" stroke="#444" stroke-width="1.6"/>
<path d="M662 451.9 L667.4 457.3 M667.4 451.9 L662 457.3" stroke="#333" stroke-width="2"/>
<path d="M648 485.8 H661.6 V482.2 L671.3 490 L661.6 497.8 V494.3 H648" fill="none" stroke="#3c3c3c" stroke-width="1.6" stroke-miterlimit="3"/>
</svg>
</body></html>
